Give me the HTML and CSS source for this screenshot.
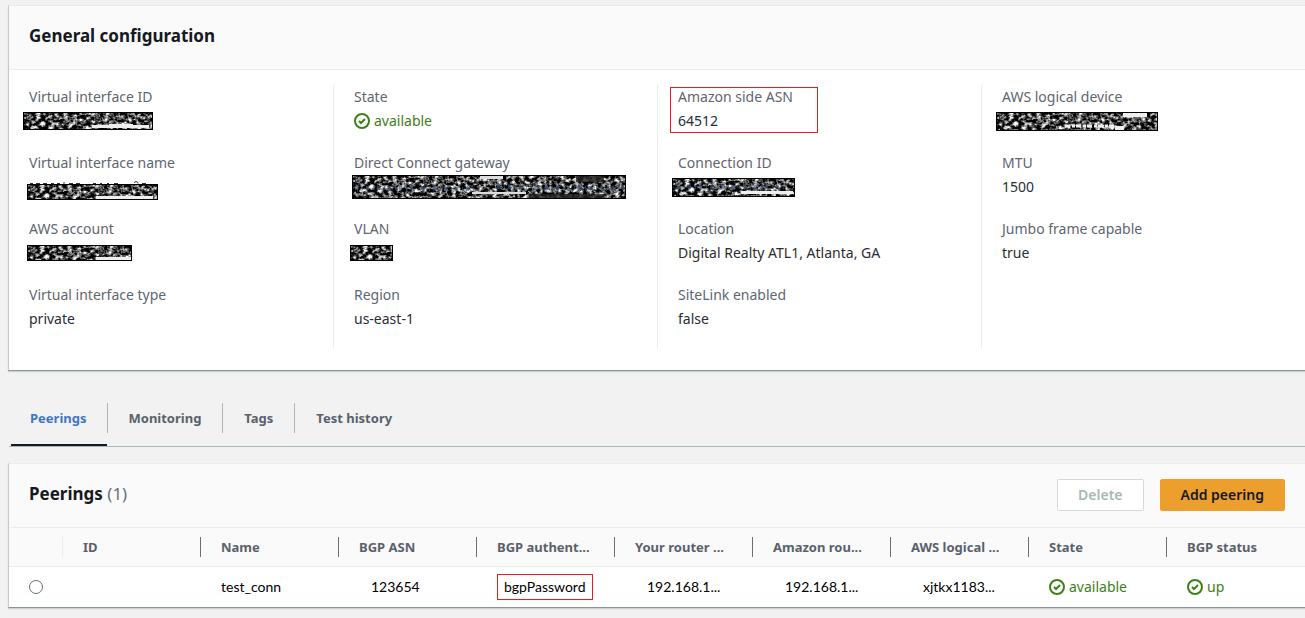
FILE: index.html
```html
<!DOCTYPE html>
<html lang="en">
<head>
    <meta charset="UTF-8">
    <meta name="viewport" content="width=device-width, initial-scale=1.0">
    <title>Virtual interface</title>
    <link rel="stylesheet" href="styles.css">
</head>
<body>

    <!-- Shared icon and noise filters -->
    <svg class="defs" aria-hidden="true">
        <symbol id="check" viewBox="0 0 16 16">
            <circle cx="8" cy="8" r="7" fill="none" stroke="currentColor" stroke-width="2"/>
            <path d="M5 8l2 2 4-4" fill="none" stroke="currentColor" stroke-width="2"/>
        </symbol>
        <filter id="noise" x="0" y="0" width="100%" height="100%" color-interpolation-filters="sRGB">
            <feTurbulence type="fractalNoise" baseFrequency="0.22 0.28" numOctaves="3" seed="4"/>
            <feColorMatrix values="2.6 0 0 0 -1  2.6 0 0 0 -1  2.6 0 0 0 -1  0 0 0 0 1"/>
        </filter>
    </svg>

    <section class="card">
        <div class="card-header">
            <h2>General configuration</h2>
        </div>
        <div class="columns">
            <dl class="column">
                <div class="item">
                    <dt>Virtual interface ID</dt>
                    <dd><svg class="redacted id" viewBox="0 0 130 18"><rect width="130" height="18" filter="url(#noise)"/><path d="M69 13h17v-1h24v1h16v3H69z" fill="#eee"/><rect class="frame" x="0.5" y="0.5" width="129" height="17"/></svg></dd>
                </div>
                <div class="item low">
                    <dt>Virtual interface name</dt>
                    <dd><svg class="redacted name" viewBox="0 0 131 16"><path d="M3-.5h3M9-.5h4M16-.5h4M24-.5h3M30-.5h3M37-2v2M42-.5h4M49-.5h4M66-.5h3M73-.5h2M80-.5h2M87-.5h4M107-1.5l2-1 2 1v1M115-.5h4" fill="none" stroke="#333"/><rect width="131" height="16" filter="url(#noise)"/><path d="M69 12h57v3H69z" fill="#eee"/><rect class="frame" x="0.5" y="0.5" width="130" height="15"/></svg></dd>
                </div>
                <div class="item">
                    <dt>AWS account</dt>
                    <dd><svg class="redacted account" viewBox="0 0 105 16"><rect width="105" height="16" filter="url(#noise)"/><path d="M69 12h35v3H69z" fill="#eee"/><rect class="frame" x="0.5" y="0.5" width="104" height="15"/></svg></dd>
                </div>
                <div class="item">
                    <dt>Virtual interface type</dt>
                    <dd>private</dd>
                </div>
            </dl>
            <dl class="column">
                <div class="item">
                    <dt>State</dt>
                    <dd class="status"><svg class="icon"><use href="#check"/></svg>available</dd>
                </div>
                <div class="item">
                    <dt>Direct Connect gateway</dt>
                    <dd><svg class="redacted gateway" viewBox="0 0 274 24"><rect width="274" height="24" filter="url(#noise)"/><path d="M128 1h23v3h-23zM120 17h54v2h-54z" fill="#ddd"/><path d="M177 19h75v4h-75zM224 1h28v6h-28z" fill="#222" opacity="0.8"/><path d="M3 13h60M70 14h55M145 12h30M182 13h90" stroke="#3a5f8f" stroke-width="4" stroke-dasharray="3 4 1 3" opacity="0.6"/><rect class="frame" x="0.5" y="0.5" width="273" height="23"/></svg></dd>
                </div>
                <div class="item">
                    <dt>VLAN</dt>
                    <dd><svg class="redacted vlan" viewBox="0 0 43 16"><rect width="43" height="16" filter="url(#noise)"/><rect class="frame" x="0.5" y="0.5" width="42" height="15"/></svg></dd>
                </div>
                <div class="item">
                    <dt>Region</dt>
                    <dd>us-east-1</dd>
                </div>
            </dl>
            <dl class="column">
                <div class="item marked">
                    <dt>Amazon side ASN</dt>
                    <dd>64512</dd>
                </div>
                <div class="item">
                    <dt>Connection ID</dt>
                    <dd><svg class="redacted connection" viewBox="0 0 123 19"><rect width="123" height="19" filter="url(#noise)"/><path d="M69 13h52v3H69z" fill="#eee"/><path d="M5 9h110" stroke="#3a5f8f" stroke-width="4" stroke-dasharray="3 4 1 3" opacity="0.6"/><rect class="frame" x="0.5" y="0.5" width="122" height="18"/></svg></dd>
                </div>
                <div class="item">
                    <dt>Location</dt>
                    <dd>Digital Realty ATL1, Atlanta, GA</dd>
                </div>
                <div class="item">
                    <dt>SiteLink enabled</dt>
                    <dd>false</dd>
                </div>
            </dl>
            <dl class="column">
                <div class="item">
                    <dt>AWS logical device</dt>
                    <dd><svg class="redacted device" viewBox="0 0 162 19"><rect width="162" height="19" filter="url(#noise)"/><path d="M127 1h24v4h-24zM119 14h9v4h-9z" fill="#eee"/><path d="M69 14h50" stroke="#eee" stroke-width="3" stroke-dasharray="5 2 3 1"/><rect class="frame" x="0.5" y="0.5" width="161" height="18"/></svg></dd>
                </div>
                <div class="item">
                    <dt>MTU</dt>
                    <dd>1500</dd>
                </div>
                <div class="item">
                    <dt>Jumbo frame capable</dt>
                    <dd>true</dd>
                </div>
            </dl>
        </div>
    </section>

    <nav class="tabs">
        <a href="#peerings" class="active">Peerings</a>
        <a href="#monitoring">Monitoring</a>
        <a href="#tags">Tags</a>
        <a href="#history">Test history</a>
    </nav>

    <section class="card" id="peerings">
        <div class="card-header">
            <h2>Peerings <span class="count">(1)</span></h2>
            <div class="actions">
                <button type="button" disabled>Delete</button>
                <button type="button" class="primary">Add peering</button>
            </div>
        </div>
        <table>
            <thead>
                <tr>
                    <th class="select"></th>
                    <th><span>ID</span></th>
                    <th><span>Name</span></th>
                    <th><span>BGP ASN</span></th>
                    <th><span>BGP authent...</span></th>
                    <th><span>Your router ...</span></th>
                    <th><span>Amazon rou...</span></th>
                    <th><span>AWS logical ...</span></th>
                    <th><span>State</span></th>
                    <th><span>BGP status</span></th>
                </tr>
            </thead>
            <tbody>
                <tr>
                    <td class="select"><input type="radio" name="peering" aria-label="Select test_conn"></td>
                    <td></td>
                    <td>test_conn</td>
                    <td class="indent">123654</td>
                    <td><span class="highlight">bgpPassword</span></td>
                    <td class="indent">192.168.1...</td>
                    <td class="indent">192.168.1...</td>
                    <td class="indent">xjtkx1183...</td>
                    <td><div class="status"><svg class="icon"><use href="#check"/></svg>available</div></td>
                    <td><div class="status"><svg class="icon"><use href="#check"/></svg>up</div></td>
                </tr>
            </tbody>
        </table>
    </section>

</body>
</html>
```
FILE: styles.css
```css
* {
    box-sizing: border-box;
}

body {
    margin: 0;
    padding: 5px 0 10px 8px;
    background-color: #f2f2f2;
    color: #16191f;
    font-family: "Noto Sans", "Open Sans", sans-serif;
    font-size: 14px;
    line-height: 24px;
}

.defs {
    position: absolute;
    width: 0;
    height: 0;
}

.card {
    background-color: #fff;
    border-top: 1px solid #eaeded;
    border-left: 1px solid #c4c9c9;
    border-bottom: 1px solid #879596;
    box-shadow: 0 1px 1px rgba(0, 28, 36, 0.15);
}

.card-header {
    display: flex;
    justify-content: space-between;
    align-items: center;
    height: 64px;
    padding: 0 20px 2px;
    background-color: #fafafa;
    border-bottom: 1px solid #eaeded;
}

h2 {
    margin: 0;
    padding-bottom: 2px;
    font-size: 17px;
    font-weight: 700;
}

.count {
    color: #687078;
    font-weight: 400;
}

.columns {
    display: grid;
    grid-template-columns: repeat(4, 1fr);
    padding: 15px 0 21px;
}

.column {
    margin: 0;
    padding-left: 20px;
}

.column + .column {
    border-left: 1px solid #eaeded;
}

.item {
    position: relative;
    padding-bottom: 18px;
}

dt {
    color: #5f6670;
}

dd {
    display: flex;
    align-items: center;
    height: 24px;
    margin: 0;
    color: #2a2d33;
}

/* Red frame drawn over the ASN item */
.marked::after {
    content: "";
    position: absolute;
    top: 2px;
    left: -8px;
    width: 146px;
    height: 44px;
    border: 1px solid #ed1c24;
}

.redacted {
    flex: none;
    margin-left: -2px;
    overflow: visible;
}

.frame {
    fill: none;
    stroke: #000;
}

.low dd {
    padding-top: 10px;
}

.id {
    width: 130px;
    margin-left: -6px;
}

.name {
    width: 131px;
}

.account {
    width: 105px;
}

.gateway {
    width: 274px;
}

.vlan {
    width: 43px;
    margin-left: -4px;
}

.connection {
    width: 123px;
    margin-left: -6px;
}

.device {
    width: 162px;
    margin-left: -6px;
}

.status {
    display: flex;
    align-items: center;
    gap: 4px;
    color: #3c8019;
}

.icon {
    flex: none;
    width: 16px;
    height: 16px;
}

.tabs {
    display: flex;
    margin: 24px 0 16px 1px;
    padding-left: 2px;
    border-bottom: 1px solid #aab7b8;
}

.tabs a {
    position: relative;
    padding: 11px 21px 14px 22px;
    color: #5a616a;
    font-size: 13px;
    font-weight: 700;
    text-decoration: none;
}

.tabs a.active {
    padding-right: 20px;
    padding-left: 19px;
    border-bottom: 2px solid #16191f;
    color: #3f76c4;
}

.tabs a + a::before {
    content: "";
    position: absolute;
    top: 8px;
    left: 0;
    height: 30px;
    border-left: 1px solid #aab7b8;
}

.actions {
    display: flex;
    gap: 16px;
}

button {
    height: 32px;
    padding: 0 20px;
    border: 1px solid #d5dbdb;
    border-radius: 2px;
    background-color: #fff;
    color: #aab7b8;
    font: inherit;
    font-weight: 600;
}

button.primary {
    border-color: #ec9f2c;
    background-color: #ec9f2c;
    color: #16191f;
}

table {
    width: 100%;
    border-collapse: collapse;
    table-layout: fixed;
}

th {
    height: 38px;
    padding: 0;
    background-color: #fafafa;
    border-bottom: 1px solid #eaeded;
    color: #5a616a;
    font-size: 13px;
    font-weight: 700;
    line-height: 20px;
    text-align: left;
    white-space: nowrap;
}

th span {
    display: block;
    margin-left: -1px;
    padding-left: 20px;
    border-left: 1px solid #687078;
}

th.select + th span {
    border-color: #eaeded;
}

td {
    height: 41px;
    padding: 0 0 0 20px;
    color: #000;
    font-family: Lato, "Noto Sans", sans-serif;
    font-size: 14px;
    white-space: nowrap;
}

.select {
    width: 54px;
}

td .status {
    font-family: "Noto Sans", "Open Sans", sans-serif;
}

.indent {
    padding-left: 32px;
}

input[type="radio"] {
    appearance: none;
    display: block;
    width: 14px;
    height: 14px;
    margin: 0;
    border: 1px solid #687078;
    border-radius: 50%;
    background-color: #fff;
}

.highlight {
    display: inline-block;
    padding: 0 6px;
    border: 1px solid #ed1c24;
}
```
